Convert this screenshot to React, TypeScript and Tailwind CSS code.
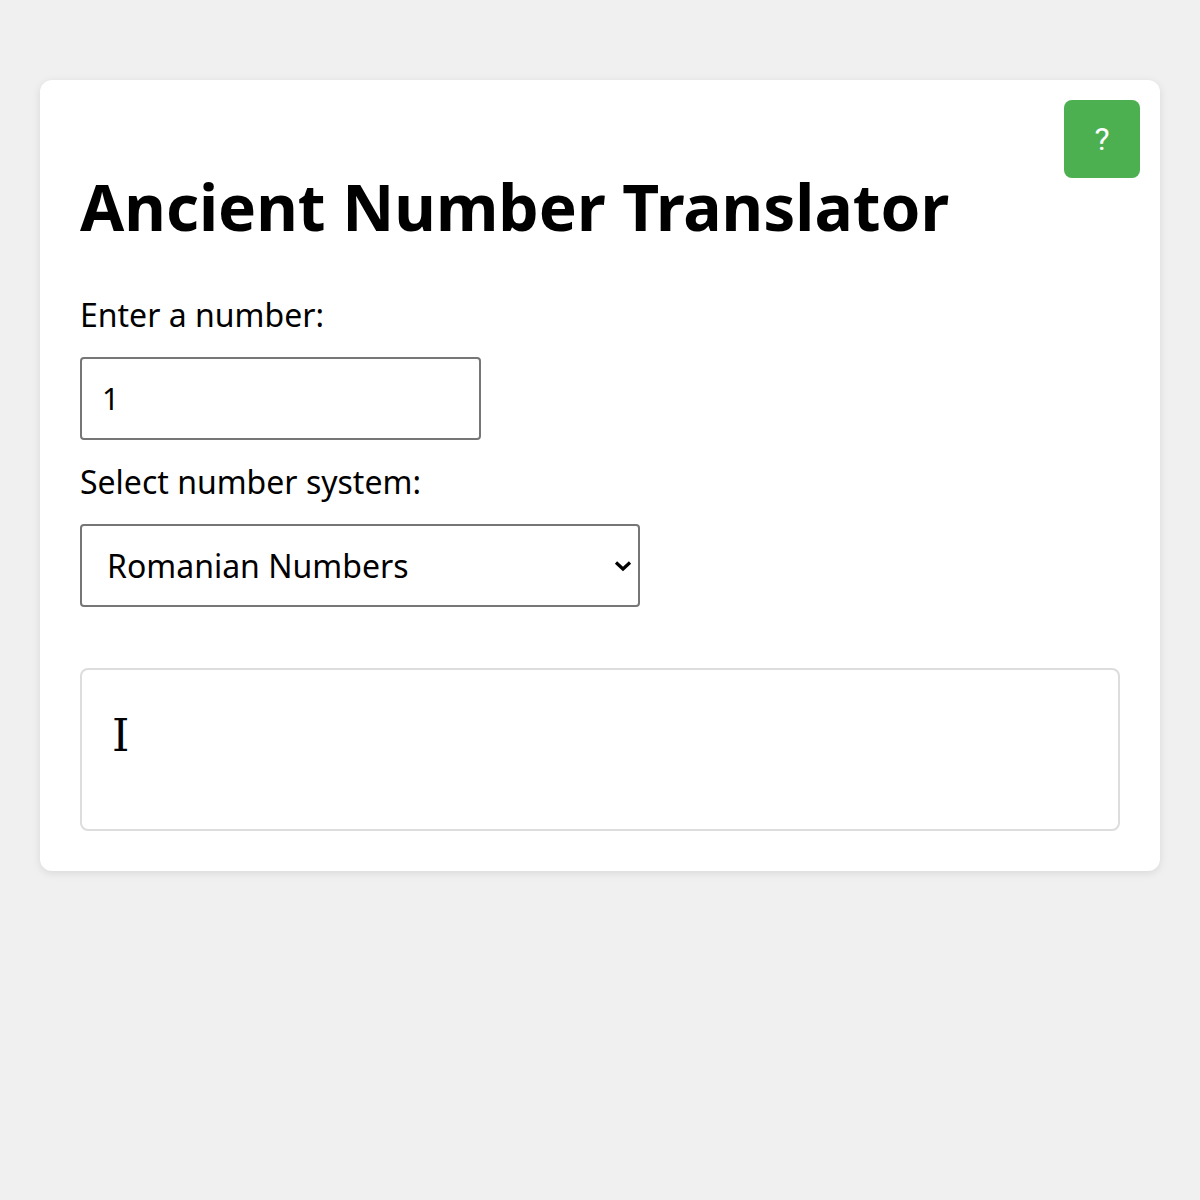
import { useState } from "react";

const toRoman = (n: number) => {
  const map: [number, string][] = [
    [1000, "M"], [900, "CM"], [500, "D"], [400, "CD"],
    [100, "C"], [90, "XC"], [50, "L"], [40, "XL"],
    [10, "X"], [9, "IX"], [5, "V"], [4, "IV"], [1, "I"],
  ];
  let out = "";
  let rest = n;
  for (const [v, s] of map) {
    while (rest >= v) {
      out += s;
      rest -= v;
    }
  }
  return out;
};

const App = () => {
  const [value, setValue] = useState("1");
  const [system, setSystem] = useState("roman");

  const num = parseInt(value, 10);
  const result = system === "roman" && num > 0 ? toRoman(num) : value;

  return (
    <div className="min-h-[1200px] bg-[#f0f0f0] px-10 pt-20 font-['Noto_Sans',sans-serif] text-black">
      <div className="relative rounded-xl bg-white p-10 shadow-[0_2px_8px_rgba(0,0,0,0.1)]">
        <button className="absolute right-5 top-5 flex h-[78px] w-[76px] items-center justify-center rounded-lg bg-[#4caf50] font-['Roboto',sans-serif] text-[32px] text-white">
          ?
        </button>

        <h1 className="my-[43px] text-[64px] font-bold leading-[87px]">
          Ancient Number Translator
        </h1>

        <label className="block text-[32px] leading-[44px]">Enter a number:</label>
        <input
          type="number"
          value={value}
          onChange={(e) => setValue(e.target.value)}
          className="mt-5 h-[83px] w-[401px] rounded-[4px] border-2 border-[#767676] px-[20px] text-[30px] outline-none [appearance:textfield]"
        />

        <label className="mt-5 block text-[32px] leading-[44px]">Select number system:</label>
        <div className="relative mt-5 w-[560px]">
          <select
            value={system}
            onChange={(e) => setSystem(e.target.value)}
            className="h-[83px] w-full appearance-none rounded-[4px] border-2 border-[#767676] bg-white pl-[25px] pr-10 text-[32px]"
          >
            <option value="roman">Romanian Numbers</option>
            <option value="egyptian">Egyptian Numbers</option>
            <option value="babylonian">Babylonian Numbers</option>
          </select>
          <svg
            className="pointer-events-none absolute right-[8px] top-1/2 -translate-y-1/2"
            width="18"
            height="12"
            viewBox="0 0 18 12"
          >
            <path d="M2 2.5 L9 9 L16 2.5" fill="none" stroke="#000" strokeWidth="3.2" />
          </svg>
        </div>

        <div className="mt-[61px] h-[163px] rounded-lg border-2 border-[#dddddd] pl-[30px] pt-[38px] font-['DejaVu_Serif',serif] text-[44px] leading-[55px]">
          {result}
        </div>
      </div>
    </div>
  );
};

export default App;
